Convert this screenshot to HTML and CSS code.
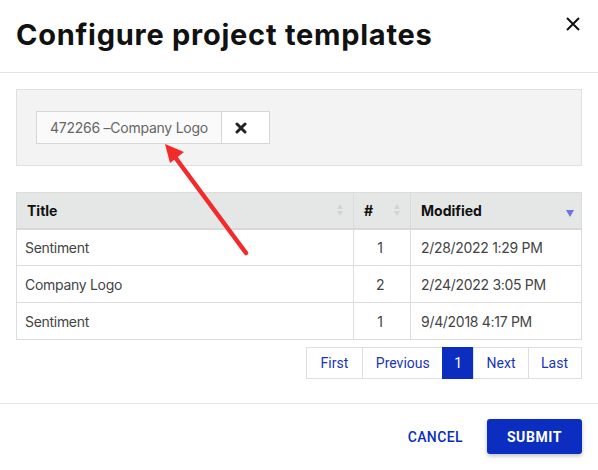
FILE: index.html
```html
<!DOCTYPE html>
<html>
<head>
<meta charset="utf-8">
<link rel="stylesheet" href="styles.css">
</head>
<body>
<div class="dialog">
  <div class="header">
    <h1 class="title">Configure project templates</h1>
    <button class="close" aria-label="Close">
      <svg width="14" height="14" viewBox="0 0 14 14"><path d="M1 1L13 13M13 1L1 13" stroke="#111" stroke-width="2" fill="none"/></svg>
    </button>
  </div>
  <div class="content">
    <div class="panel">
      <div class="chip">
        <span class="chip-text">472266 –Company Logo</span>
        <button class="chip-remove" aria-label="Remove">
          <svg width="12" height="12" viewBox="0 0 12 12"><path d="M2 2L10 10M10 2L2 10" stroke="#222" stroke-width="3" stroke-linecap="round" fill="none"/></svg>
        </button>
      </div>
    </div>
    <table class="grid">
      <thead>
        <tr>
          <th class="col-title"><span>Title</span><span class="sort"></span></th>
          <th class="col-num"><span>#</span><span class="sort"></span></th>
          <th class="col-mod"><span>Modified</span><span class="sort-desc"></span></th>
        </tr>
      </thead>
      <tbody>
        <tr><td>Sentiment</td><td class="num">1</td><td>2/28/2022 1:29 PM</td></tr>
        <tr><td>Company Logo</td><td class="num">2</td><td>2/24/2022 3:05 PM</td></tr>
        <tr><td>Sentiment</td><td class="num">1</td><td>9/4/2018 4:17 PM</td></tr>
      </tbody>
    </table>
    <div class="pager">
      <a class="page first">First</a><a class="page">Previous</a><a class="page active">1</a><a class="page">Next</a><a class="page last">Last</a>
    </div>
  </div>
  <div class="footer">
    <button class="btn-text">CANCEL</button>
    <button class="btn-primary">SUBMIT</button>
  </div>
  <svg class="arrow" width="598" height="470" viewBox="0 0 598 470">
    <line x1="246" y1="253" x2="172" y2="153" stroke="#f42a2a" stroke-width="4.5" stroke-linecap="round"/>
    <polygon points="165,144 184,152 170,163" fill="#f42a2a"/>
  </svg>
</div>
</body>
</html>
```

FILE: styles.css
```css
* { box-sizing: border-box; }
html, body { margin: 0; padding: 0; background: #fff; }
body { font-family: "Inter", "Roboto", sans-serif; color: #333; }

.dialog { position: relative; width: 598px; height: 470px; background: #fff; }

.header {
  display: flex;
  align-items: flex-start;
  justify-content: space-between;
  height: 73px;
  padding: 15px 16px 0 16px;
  border-bottom: 1px solid #e4e4e4;
}
.title {
  margin: 0;
  font-size: 29px;
  font-weight: 700;
  line-height: 40px;
  color: #111;
  letter-spacing: 0.75px;
}
.close {
  border: 0;
  background: none;
  padding: 0;
  margin: 2px 2px 0 0;
  width: 14px;
  height: 14px;
  cursor: pointer;
}
.close svg { display: block; }

.content { padding: 16px 16px 0 16px; }

.panel {
  height: 77px;
  background: #f3f3f3;
  border: 1px solid #e0e0e0;
  padding: 21px 0 0 19px;
}
.chip { display: flex; height: 33px; }
.chip-text {
  display: flex;
  align-items: center;
  width: 186px;
  padding-left: 13px;
  background: #fafafa;
  border: 1px solid #d6d6d6;
  font-size: 14px;
  letter-spacing: -0.25px;
  color: #666;
}
.chip-remove {
  width: 48px;
  height: 33px;
  border: 1px solid #d6d6d6;
  border-left: 0;
  background: #fff;
  display: flex;
  align-items: center;
  justify-content: center;
  padding: 0;
}
.chip-remove svg { display: block; margin-left: -10px; }

.grid {
  margin-top: 26px;
  width: 566px;
  border-collapse: collapse;
  font-size: 14px;
}
.grid th, .grid td {
  border: 1px solid #dcdcdc;
  height: 37px;
  padding: 0 8px;
  text-align: left;
}
.grid thead th {
  background: #e5e6e6;
  color: #111;
  font-weight: 700;
  font-size: 14px;
  height: 36px;
  border-bottom: 2px solid #d8d8d8;
  position: relative;
  padding-left: 10px;
}
.grid td { color: #444; letter-spacing: -0.3px; }
.col-title { width: 337px; }
.col-num { width: 57px; }
.grid td.num { text-align: center; padding: 0 4px 0 0; }
.grid tbody td:first-child { padding-left: 8px; }
.grid tbody td:last-child { padding-left: 10px; }

.sort {
  position: absolute;
  right: 9px;
  top: 11px;
  width: 7px;
  height: 14px;
}
.sort::before, .sort::after {
  content: "";
  position: absolute;
  left: 0;
  border-left: 3.5px solid transparent;
  border-right: 3.5px solid transparent;
}
.sort::before { top: 0; border-bottom: 5px solid #d2d3d3; }
.sort::after { top: 7px; border-top: 5px solid #d2d3d3; }
.sort-desc {
  position: absolute;
  right: 7px;
  top: 17px;
  border-left: 4px solid transparent;
  border-right: 4px solid transparent;
  border-top: 7px solid #6f73e0;
}

.pager {
  display: flex;
  justify-content: flex-end;
  margin-top: 7px;
}
.page {
  display: flex;
  align-items: center;
  justify-content: center;
  height: 32px;
  padding: 0 12.5px;
  border: 1px solid #dedede;
  margin-left: -1px;
  font-family: "Roboto", sans-serif;
  font-size: 14px;
  color: #1a35b8;
  background: #fff;
}
.page.first { padding: 0 14px; }
.page.last { padding: 0 13px 0 12px; }
.page.active {
  background: #0b2ec0;
  color: #fff;
  border-color: #0b2ec0;
  padding: 0 11px;
}

.footer {
  margin-top: 24px;
  border-top: 1px solid #e4e4e4;
  display: flex;
  justify-content: flex-end;
  align-items: center;
  padding: 15px 16px 0 0;
  gap: 24px;
}
.btn-text {
  border: 0;
  background: none;
  font-family: "Roboto", sans-serif;
  font-size: 14px;
  font-weight: 500;
  color: #0b2ec0;
  letter-spacing: 0.4px;
  padding: 0;
}
.btn-primary {
  width: 95px;
  height: 35px;
  border: 0;
  border-radius: 3px;
  background: #0b2ec0;
  color: #fff;
  font-family: "Roboto", sans-serif;
  font-size: 14px;
  font-weight: 700;
  letter-spacing: 0.6px;
  box-shadow: 0 2px 4px rgba(0,0,0,0.25);
}

.arrow { position: absolute; left: 0; top: 0; pointer-events: none; }
```
